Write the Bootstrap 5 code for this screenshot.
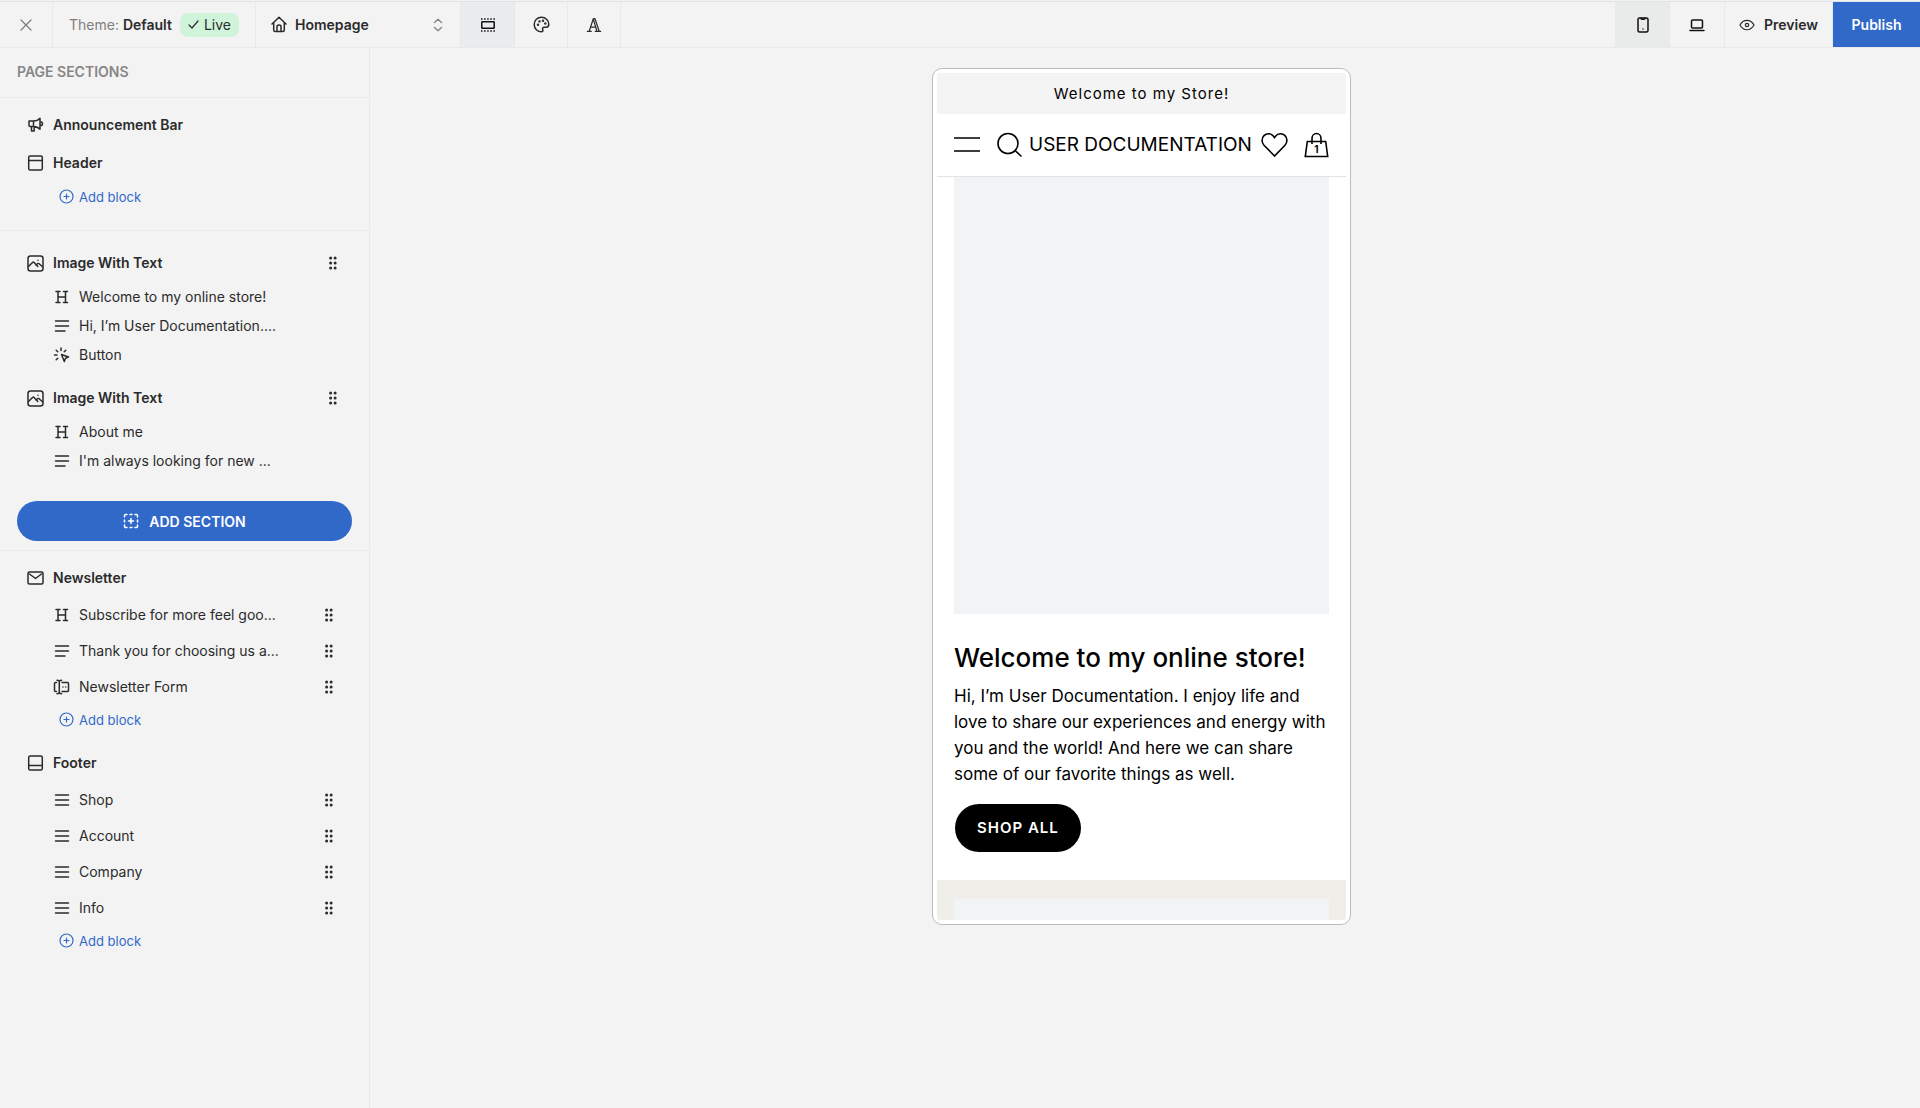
<!DOCTYPE html>
<html lang="en">
<head>
<meta charset="utf-8">
<meta name="viewport" content="width=device-width, initial-scale=1">
<title>Theme editor – Homepage</title>
<link rel="stylesheet" href="https://cdn.jsdelivr.net/npm/bootstrap@5.3.0/dist/css/bootstrap.min.css">
<style>
  :root { --line: #e8e9ea; --ink: #2b2b2b; --brand: #3169c9; }
  body { font-family: Inter, "Liberation Sans", sans-serif; font-size: 14px; line-height: 20px; color: var(--ink); background: #f3f3f3; }
  svg { display: block; flex: none; fill: none; stroke: currentColor; stroke-width: 1.5; stroke-linecap: round; stroke-linejoin: round; }
  button { color: inherit; }
  .thin { stroke-width: 1.2; }
  .topbar { height: 47px; margin-top: 1px; border-top: 1px solid #e0e3e3; border-bottom: 1px solid var(--line); }
  .cell { border: 0; border-right: 1px solid var(--line); background: none; border-radius: 0; padding: 0; display: flex; align-items: center; justify-content: center; flex: none; }
  .cell-close { width: 53px; color: #7b7b7b; }
  .cell-theme { width: 203px; gap: 8px; }
  .cell-page { width: 205px; padding: 0 17px 0 15px; }
  .page-pick { appearance: none; border: 0; background: none; flex: 1; min-width: 0; padding: 0 0 0 8px; font-weight: 600; color: inherit; }
  .cell-tool { width: 53px; }
  .cell-view { width: 55px; color: #111; }
  .cell-preview { width: 108px; gap: 9px; font-weight: 600; }
  .tool-on { width: 54px; background: #eaecee; }
  .view-on { background: #e9eaea; }
  .live-tag { background: #d0f4da; border-radius: 8px; height: 24px; padding: 0 8px; gap: 5px; }
  .btn-publish { background: var(--brand); color: #fff; font-weight: 600; border: 0; width: 87px; padding: 0; }
  .muted-ink { color: #7f7f7f; }
  .sidebar { width: 370px; border-right: 1px solid var(--line); }
  .side-title { font-size: 14px; line-height: 20px; font-weight: 600; color: #868686; padding: 14px 17px 15px; margin: 0; border-bottom: 1px solid var(--line); }
  .group-top { padding: 8px 0 19px; border-bottom: 1px solid var(--line); }
  .group-mid { padding: 13px 0 9px; border-bottom: 1px solid var(--line); }
  .group-low { padding: 8px 0; }
  .sec-row { display: flex; align-items: center; gap: 9px; height: 38px; padding: 0 32px 0 27px; font-weight: 600; }
  .sec-next { margin-top: 10px; }
  .blk-row { display: flex; align-items: center; gap: 9px; height: 36px; padding: 0 36px 0 53px; }
  .group-mid .blk-row { height: 29px; }
  .name { flex: 1; min-width: 0; }
  .add-row { display: flex; align-items: center; gap: 5px; height: 29px; margin-left: 59px; padding: 0; border: 0; background: none; color: var(--brand); font-size: 13px; }
  .grip { border: 0; background: none; padding: 0; }
  .grip svg { fill: currentColor; stroke: none; }
  .add-section { padding: 26px 17px 0; }
  .btn-section { background: var(--brand); color: #fff; font-size: 14px; font-weight: 600; border: 0; height: 40px; gap: 10px; border-radius: 20px; }
  .btn-section:hover, .btn-publish:hover { background: #2859b0; color: #fff; }
  .stage { padding: 20px 7px 20px 0; }
  .phone { width: 419px; height: 857px; padding: 4px; background: #fff; border: 1px solid #bcbcbc; border-radius: 10px; color: #000; }
  .screen { border-radius: 3px; overflow: hidden; }
  .promo { background: #f4f4f4; height: 41px; letter-spacing: 1px; font-size: 15px; }
  .shop-head { height: 63px; padding: 0 17px; border-bottom: 1px solid #e3e3e3; }
  .shop-head svg { stroke-width: 1.6; stroke-linecap: butt; stroke-linejoin: miter; }
  .shop-head a { color: inherit; text-decoration: none; }
  .brand-name { font-size: 19px; line-height: 24px; margin-left: 5px; white-space: nowrap; }
  .hero { padding: 0 17px 28px; }
  .hero-img { height: 437px; background: #f2f3f5; }
  .hero h1 { font-size: 26px; line-height: 32px; font-weight: 500; margin: 28px 0 9px; }
  .hero p { font-size: 17px; line-height: 26px; margin: 0 0 17px; }
  .btn-shop { background: #000; color: #fff; border-radius: 24px; height: 48px; padding: 0 22px; font-size: 15px; font-weight: 600; letter-spacing: 1px; display: inline-flex; align-items: center; margin-left: 1px; }
  .about { background: #efeee9; padding: 19px 17px 0; }
  .about-img { background: #f2f3f5; }
</style>
<script src="https://cdn.jsdelivr.net/npm/bootstrap@5.3.0/dist/js/bootstrap.bundle.min.js"></script>
</head>
<body>
<svg class="d-none" aria-hidden="true">
  <symbol id="i-grip" viewBox="0 0 8 14"><circle cx="1.6" cy="2" r="1.5"/><circle cx="6.1" cy="2" r="1.5"/><circle cx="1.6" cy="7" r="1.5"/><circle cx="6.1" cy="7" r="1.5"/><circle cx="1.6" cy="12" r="1.5"/><circle cx="6.1" cy="12" r="1.5"/></symbol>
  <symbol id="i-h" viewBox="0 0 16 16"><path d="M4.5 2.5v11M12 2.5v11M4.5 8H12M2.5 2.5h4M10 2.5h4M2.5 13.5h4M10 13.5h4"/></symbol>
  <symbol id="i-text" viewBox="0 0 16 16"><path d="M2 3h13M2 8h13M2 13h9.500"/></symbol>
  <symbol id="i-menu" viewBox="0 0 16 16"><path d="M2 3h13M2 8h13M2 13h13"/></symbol>
  <symbol id="i-image" viewBox="0 0 17 17"><rect x="1" y="1" width="15" height="15" rx="2.500"/><path d="M1.500 11.500 5.500 7.500q.8-.7 1.600 0l3.700 4M9 10l1.500-1.300q.8-.6 1.600 0l3.400 3M11 5.200v.1"/></symbol>
  <symbol id="i-plus" viewBox="0 0 15 15"><circle cx="7.500" cy="7.500" r="6.500"/><path d="M7.500 5v5M5 7.500h5"/></symbol>
</svg>

<div class="d-flex flex-column">
<header class="topbar d-flex align-items-stretch">
  <button type="button" class="cell cell-close" aria-label="Close"><svg class="thin" width="12" height="12" viewBox="0 0 12 12"><path d="M1 1l10 10M11 1 1 11"/></svg></button>
  <div class="cell cell-theme">
    <span><span class="muted-ink">Theme:</span> <span class="fw-semibold">Default</span></span>
    <span class="live-tag d-flex align-items-center"><svg class="thin" width="11" height="9" viewBox="0 0 11 9"><path d="M1 5l3 3 6-7"/></svg>Live</span>
  </div>
  <label class="cell cell-page">
    <svg width="16" height="17" viewBox="0 0 16 17"><path d="M1 8 8 1.300 15 8M2.700 6.500V14q0 1.500 1.500 1.500h7.600q1.500 0 1.500-1.500V6.500M6 15.500V10.500q0-1.500 2-1.500t2 1.500v5"/></svg>
    <select class="page-pick" aria-label="Page"><option>Homepage</option></select>
    <svg class="muted-ink thin" width="10" height="14" viewBox="0 0 10 14"><path d="M1.500 4.500 5 1.300 8.500 4.500M1.500 9.500 5 12.700 8.500 9.500"/></svg>
  </label>
  <button type="button" class="cell cell-tool tool-on" aria-label="Sections"><svg width="16" height="16" viewBox="0 0 16 16"><rect x="1.800" y="4.700" width="12.400" height="6.600" rx=".5" stroke="#111"/><g fill="#111" stroke="none"><path d="M1 1.200h1.500v1.500H1zM4.100 1.200h1.500v1.500H4.100zM7.200 1.200h1.500v1.500H7.200zM10.300 1.200h1.500v1.500h-1.500zM13.400 1.200h1.500v1.500h-1.500zM1 13.300h1.500v1.500H1zM4.100 13.300h1.500v1.500H4.100zM7.200 13.300h1.500v1.500H7.200zM10.300 13.300h1.500v1.500h-1.500zM13.400 13.300h1.500v1.500h-1.500z"/></g></svg></button>
  <button type="button" class="cell cell-tool" aria-label="Colours"><svg width="17" height="17" viewBox="0 0 17 17"><path d="M8.500 1.200a7.300 7.300 0 1 0 0 14.600c1.300 0 1.700-1 1.300-1.900-.6-1.400-.2-2.700 1.500-2.700h2c1.600 0 2.500-1.200 2.500-2.900 0-4-3.300-7.100-7.300-7.100z"/><g fill="currentColor" stroke="none"><circle cx="5" cy="8.700" r="1.200"/><circle cx="6.500" cy="5.400" r="1.200"/><circle cx="10" cy="4.800" r="1.200"/><circle cx="12.300" cy="7.500" r="1.200"/></g></svg></button>
  <button type="button" class="cell cell-tool" aria-label="Typography"><svg class="thin" width="16" height="16" viewBox="0 0 16 16"><path d="M1.300 14.300h4M3.200 14.300 7.300 1.700h1.700l4.200 12.600M7.300 2 11 14.300M4.600 10.200h5M9.200 14.300h5.500"/></svg></button>
  <div class="d-flex ms-auto">
    <button type="button" class="cell cell-view view-on border-end-0" aria-label="Mobile view"><svg width="12" height="16" viewBox="0 0 12 16"><rect x="1" y="1" width="10" height="14" rx="1.500"/><path d="M4 1.300q0 1 1 1h2q1 0 1-1M6 12v.1"/></svg></button>
    <button type="button" class="cell cell-view" aria-label="Desktop view"><svg width="16" height="14" viewBox="0 0 16 14"><rect x="2.500" y="2" width="11" height="8" rx="1"/><path d="M1 12.500h14"/></svg></button>
    <button type="button" class="cell cell-preview"><svg class="thin" width="16" height="12" viewBox="0 0 16 12"><path d="M1 6c3.400-6.300 10.600-6.300 14 0-3.400 6.300-10.600 6.300-14 0z"/><circle cx="8" cy="6" r="1.700"/></svg>Preview</button>
    <button type="button" class="btn-publish">Publish</button>
  </div>
</header>

<div class="d-flex flex-grow-1">
<aside class="sidebar flex-shrink-0 min-vh-100">
  <h2 class="side-title">PAGE SECTIONS</h2>
  <div class="group-top">
    <div class="sec-row"><svg width="17" height="16" viewBox="0 0 17 16"><path d="M2 4h4.500q4 0 6.500-2.800v11Q10.500 9.400 6.500 9.400H3q-1 0-1-1zM6.500 4v5.400M4.500 9.500V14h2.700V9.700M13.200 4.800q2.300 0 2.300 1.900t-2.300 1.900"/></svg><span class="name">Announcement Bar</span></div>
    <div class="sec-row"><svg width="17" height="16" viewBox="0 0 17 16"><rect x="1.700" y="1" width="13.600" height="14" rx="1.500"/><path d="M1.700 5.500h13.600"/></svg><span class="name">Header</span></div>
    <button type="button" class="add-row"><svg class="thin" width="15" height="15"><use href="#i-plus"/></svg>Add block</button>
  </div>
  <div class="group-mid">
    <div class="sec-row"><svg width="17" height="17"><use href="#i-image"/></svg><span class="name">Image With Text</span><button type="button" class="grip" aria-label="Move"><svg width="8" height="14"><use href="#i-grip"/></svg></button></div>
    <div class="blk-row"><svg width="17" height="16"><use href="#i-h"/></svg><span class="name">Welcome to my online store!</span></div>
    <div class="blk-row"><svg width="17" height="16"><use href="#i-text"/></svg><span class="name">Hi, I’m User Documentation....</span></div>
    <div class="blk-row"><svg width="17" height="16" viewBox="0 0 17 16"><path d="M8.500 7.500 15.500 10l-3 1.300-1.200 3.200zM8 1v2.500M1.500 8H4M3.200 3.200l1.600 1.600M12.800 3.200l-1.600 1.600M3.200 12.800l1.600-1.600"/></svg><span class="name">Button</span></div>
    <div class="sec-row sec-next"><svg width="17" height="17"><use href="#i-image"/></svg><span class="name">Image With Text</span><button type="button" class="grip" aria-label="Move"><svg width="8" height="14"><use href="#i-grip"/></svg></button></div>
    <div class="blk-row"><svg width="17" height="16"><use href="#i-h"/></svg><span class="name">About me</span></div>
    <div class="blk-row"><svg width="17" height="16"><use href="#i-text"/></svg><span class="name">I'm always looking for new ...</span></div>
    <div class="add-section"><button type="button" class="btn btn-section w-100 d-flex align-items-center justify-content-center p-0"><svg width="16" height="16" viewBox="0 0 16 16"><path d="M1.500 4V2.500q0-1 1-1H4M12 1.500h1.500q1 0 1 1V4M14.500 12v1.500q0 1-1 1H12M4 14.500H2.500q-1 0-1-1V12M7 1.500h2M7 14.500h2M1.500 7v2M14.500 7v2M8 5.500v5M5.500 8h5"/></svg>ADD SECTION</button></div>
  </div>
  <div class="group-low">
    <div class="sec-row"><svg width="17" height="14" viewBox="0 0 17 14"><rect x="1" y="1" width="15" height="12" rx="1.500"/><path d="M2.500 3 8.500 7.500 14.500 3"/></svg><span class="name">Newsletter</span></div>
    <div class="blk-row"><svg width="17" height="16"><use href="#i-h"/></svg><span class="name">Subscribe for more feel goo...</span><button type="button" class="grip" aria-label="Move"><svg width="8" height="14"><use href="#i-grip"/></svg></button></div>
    <div class="blk-row"><svg width="17" height="16"><use href="#i-text"/></svg><span class="name">Thank you for choosing us a...</span><button type="button" class="grip" aria-label="Move"><svg width="8" height="14"><use href="#i-grip"/></svg></button></div>
    <div class="blk-row"><svg width="17" height="16" viewBox="0 0 17 16"><path d="M3.500 3.500h-1q-1 0-1 1v7q0 1 1 1h1M9 3.500h5.500q1 0 1 1v7q0 1-1 1H9M4 1.200q2.300 0 2.300 1.500v10.600q0 1.500-2.300 1.500M8.600 1.200q-2.300 0-2.300 1.500M8.600 14.800q-2.300 0-2.300-1.500M10 8v.1M12.700 8v.1"/></svg><span class="name">Newsletter Form</span><button type="button" class="grip" aria-label="Move"><svg width="8" height="14"><use href="#i-grip"/></svg></button></div>
    <button type="button" class="add-row"><svg class="thin" width="15" height="15"><use href="#i-plus"/></svg>Add block</button>
    <div class="sec-row sec-next"><svg width="17" height="16" viewBox="0 0 17 16"><rect x="1.700" y="1" width="13.600" height="14" rx="1.500"/><path d="M1.700 10.500h13.600"/></svg><span class="name">Footer</span></div>
    <div class="blk-row"><svg width="17" height="16"><use href="#i-menu"/></svg><span class="name">Shop</span><button type="button" class="grip" aria-label="Move"><svg width="8" height="14"><use href="#i-grip"/></svg></button></div>
    <div class="blk-row"><svg width="17" height="16"><use href="#i-menu"/></svg><span class="name">Account</span><button type="button" class="grip" aria-label="Move"><svg width="8" height="14"><use href="#i-grip"/></svg></button></div>
    <div class="blk-row"><svg width="17" height="16"><use href="#i-menu"/></svg><span class="name">Company</span><button type="button" class="grip" aria-label="Move"><svg width="8" height="14"><use href="#i-grip"/></svg></button></div>
    <div class="blk-row"><svg width="17" height="16"><use href="#i-menu"/></svg><span class="name">Info</span><button type="button" class="grip" aria-label="Move"><svg width="8" height="14"><use href="#i-grip"/></svg></button></div>
    <button type="button" class="add-row"><svg class="thin" width="15" height="15"><use href="#i-plus"/></svg>Add block</button>
  </div>
</aside>

<main class="stage flex-grow-1 d-flex justify-content-center align-items-start">
  <div class="phone d-flex">
    <div class="screen flex-grow-1 d-flex flex-column">
      <div class="promo d-flex align-items-center justify-content-center flex-shrink-0">Welcome to my Store!</div>
      <div class="shop-head d-flex align-items-center flex-shrink-0">
        <a href="#" aria-label="Menu"><svg width="26" height="26" viewBox="0 0 26 26"><path d="M0 6h26M0 19h26"/></svg></a>
        <a href="#" class="ms-3" aria-label="Search"><svg width="28" height="26" viewBox="0 0 28 26"><circle cx="12" cy="11.500" r="10"/><path d="M19 18.500l6.500 6"/></svg></a>
        <a href="#" class="brand-name">USER DOCUMENTATION</a>
        <a href="#" class="ms-auto" aria-label="Wishlist"><svg width="27" height="26" viewBox="0 0 27 26"><path d="M13.500 24 3 13.200C.4 10.500.5 6 3 3.600c2.700-2.600 7-2.400 9.300.5l1.200 1.600 1.200-1.600C17 1.200 21.300 1 24 3.600c2.500 2.400 2.600 6.900 0 9.600z"/></svg></a>
        <a href="#" class="ms-3" aria-label="Bag, 1 item"><svg width="25" height="26" viewBox="0 0 25 26"><path d="M3.300 9.500h18.400l2 15H1.300zM8 12V6.500a4.500 5 0 0 1 9 0V12"/><text x="12.500" y="21" font-size="10" font-weight="700" text-anchor="middle" fill="#000" stroke="none">1</text></svg></a>
      </div>
      <section class="hero flex-shrink-0">
        <div class="hero-img"></div>
        <h1>Welcome to my online store!</h1>
        <p>Hi, I’m User Documentation. I enjoy life and love to share our experiences and energy with you and the world! And here we can share some of our favorite things as well.</p>
        <a href="#" class="btn-shop text-decoration-none">SHOP ALL</a>
      </section>
      <section class="about flex-grow-1 d-flex"><div class="about-img flex-grow-1"></div></section>
    </div>
  </div>
</main>
</div>
</div>
</body>
</html>
